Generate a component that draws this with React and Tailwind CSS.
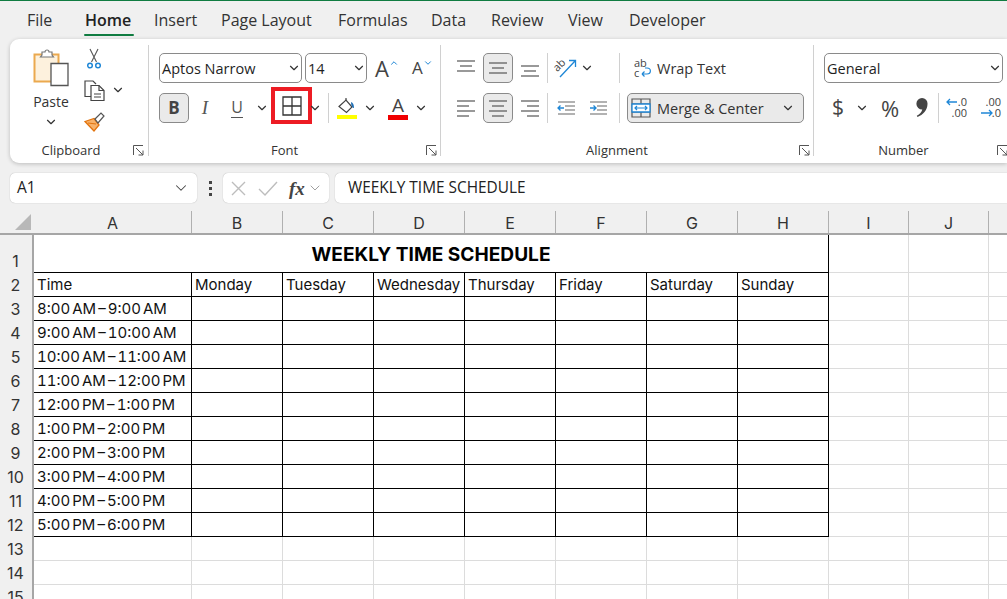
import { ChevronDown } from 'lucide-react'

const tabs = [
  { label: 'File', w: 'w-[58px]' },
  { label: 'Home', w: 'w-[69px]', active: true },
  { label: 'Insert', w: 'w-[67px]' },
  { label: 'Page Layout', w: 'w-[117px]' },
  { label: 'Formulas', w: 'w-[93px]' },
  { label: 'Data', w: 'w-[60px]' },
  { label: 'Review', w: 'w-[77px]' },
  { label: 'View', w: 'w-[61px]' },
  { label: 'Developer', w: 'w-[90px]' },
]

const columns = ['A', 'B', 'C', 'D', 'E', 'F', 'G', 'H', 'I', 'J', '']

const days = ['Monday', 'Tuesday', 'Wednesday', 'Thursday', 'Friday', 'Saturday', 'Sunday']

const times = [
  '8:00 AM – 9:00 AM',
  '9:00 AM – 10:00 AM',
  '10:00 AM – 11:00 AM',
  '11:00 AM – 12:00 PM',
  '12:00 PM – 1:00 PM',
  '1:00 PM – 2:00 PM',
  '2:00 PM – 3:00 PM',
  '3:00 PM – 4:00 PM',
  '4:00 PM – 5:00 PM',
  '5:00 PM – 6:00 PM',
]

const gridCols = 'grid grid-cols-[34px_158px_91px_91px_91px_91px_91px_91px_91px_80px_80px_19px]'

function Chev({ className = '' }) {
  return <ChevronDown size={14} strokeWidth={2} className={`shrink-0 text-[#333] ${className}`} />
}

function Launcher() {
  return (
    <svg width="11" height="11" viewBox="0 0 11 11" fill="none" stroke="#555" strokeWidth="1">
      <path d="M.5 10V.5H10M3 3l7 7M10 5.500V10H5.500" />
    </svg>
  )
}

function Sep() {
  return <div className="h-[30px] w-px bg-[#d0d0d0]" />
}

function GroupLabel({ children, pad, launcherRight }) {
  return (
    <div className={`relative mt-auto mb-[2px] flex h-[20px] items-center justify-center text-[13px] text-[#333] ${pad}`}>
      {children}
      <div className={`absolute top-[4px] ${launcherRight}`}>
        <Launcher />
      </div>
    </div>
  )
}

function Select({ label, w }) {
  return (
    <div className={`flex h-[30px] ${w} items-center justify-between rounded-[5px] border border-[#8a8a8a] bg-white pl-[2px] text-[14.500px] text-[#1f1f1f]`}>
      <span className="pt-px">{label}</span>
      <Chev />
    </div>
  )
}

function PasteIcon() {
  return (
    <svg width="36" height="40" viewBox="0 0 36 40" fill="none">
      <path d="M1.500 6.500h24v27h-24z" fill="#fdf1dd" stroke="#eba94f" strokeWidth="2" />
      <path d="M9 7V4h3a2 2 0 0 1 4 0h3v3l1.500 2h-13z" fill="#fff" stroke="#777" strokeWidth="1.200" />
      <path d="M18 15.500h17v22H18z" fill="#fff" stroke="#555" strokeWidth="1.300" />
    </svg>
  )
}

function ScissorsIcon() {
  return (
    <svg width="14" height="21" viewBox="0 0 14 21" fill="none">
      <path d="M3 1l6.500 13M11 1L4.500 14" stroke="#555" strokeWidth="1.100" />
      <circle cx="3" cy="17.500" r="2.300" stroke="#1f87d6" strokeWidth="1.500" />
      <circle cx="11" cy="17.500" r="2.300" stroke="#1f87d6" strokeWidth="1.500" />
    </svg>
  )
}

function CopyIcon() {
  return (
    <svg width="21" height="21" viewBox="0 0 21 21" fill="none" stroke="#444" strokeWidth="1.200">
      <path d="M7 16.500H1V1h8l3 3" />
      <path d="M7 5.500h8l5 5v10H7z" fill="#fff" />
      <path d="M15 5.500v5h5M10 14h7M10 17h7" />
    </svg>
  )
}

function PainterIcon() {
  return (
    <svg width="21" height="20" viewBox="0 0 21 20" fill="none">
      <path d="M1 9.500l9-3 5 6.500-5 6z" fill="#f8b26a" stroke="#e2740f" strokeWidth="1.300" />
      <path d="M4 11l8 1" stroke="#e2740f" strokeWidth="1.200" />
      <path d="M11 7l6-6 3 3-6 7z" fill="#fff" stroke="#555" strokeWidth="1.200" />
    </svg>
  )
}

function BordersIcon() {
  return (
    <svg width="20" height="20" viewBox="0 0 20 20" fill="none" stroke="#333" strokeWidth="1.300">
      <path d="M1 1h18v18H1zM10 1v18M1 10h18" />
    </svg>
  )
}

function FillIcon() {
  return (
    <svg width="20" height="21" viewBox="0 0 20 21" fill="none">
      <path d="M2 8.500L9 2l6 7-5.500 5.500z" fill="#fff" stroke="#444" strokeWidth="1.200" />
      <path d="M9 2V0" stroke="#444" strokeWidth="1.200" />
      <path d="M14 4c2 .5 3 2.500 3 6-1.500 0-3-2-3-6z" fill="#1f6fb5" />
      <path d="M0 17h20v4H0z" fill="#ffff00" />
    </svg>
  )
}

function FontColorIcon() {
  return (
    <div className="flex w-[20px] flex-col items-center">
      <span className="h-[17px] text-[19px] leading-[17px] text-[#444]">A</span>
      <div className="mt-[1px] h-[5px] w-[20px] bg-[#f00000]" />
    </div>
  )
}

function Lines({ rows }) {
  return (
    <svg width="20" height="20" viewBox="0 0 20 20" fill="none" stroke="#555" strokeWidth="1.200">
      {rows.map((r, i) => (
        <path key={i} d={`M${r[0]} ${r[2]}H${r[1]}`} />
      ))}
    </svg>
  )
}

function OrientationIcon() {
  return (
    <svg className="overflow-visible" width="22" height="20" viewBox="0 0 22 20" fill="none">
      <path d="M5 19L20 3M14 2.500h6.500V9" stroke="#1f87d6" strokeWidth="1.300" />
      <text x="0" y="11" fontSize="11" fill="#444" transform="rotate(-45 5 10)" fontFamily="Open Sans">ab</text>
    </svg>
  )
}

function IndentIcon({ dir }) {
  return (
    <svg width="18" height="14" viewBox="0 0 18 14" fill="none">
      <path d="M1 1h17M8 5h10M8 9h10M1 13h17" stroke="#666" strokeWidth="1.200" />
      <path d={dir === 'in' ? 'M1 7h6M4.500 4.500L7 7 4.500 9.500' : 'M1 7h6M3.500 4.500L1 7l2.500 2.500'} stroke="#1f87d6" strokeWidth="1.300" />
    </svg>
  )
}

function WrapIcon() {
  return (
    <svg className="overflow-visible" width="18" height="20" viewBox="0 0 18 20" fill="none">
      <text x="0" y="9" fontSize="11" fill="#444" fontFamily="Open Sans">ab</text>
      <text x="0" y="19" fontSize="11" fill="#444" fontFamily="Open Sans">c</text>
      <path d="M8 16h5c4.500 0 4.500-6 0-6h-2M8 16l2.500-2.500M8 16l2.500 2.500" stroke="#1f87d6" strokeWidth="1.200" />
    </svg>
  )
}

function MergeIcon() {
  return (
    <svg width="20" height="20" viewBox="0 0 20 20" fill="none">
      <path d="M1 1h18v18H1zM1 6h18M1 14h18M10 1v5M10 14v5" stroke="#555" strokeWidth="1.200" />
      <path d="M1 6h18v8H1z" fill="#fff" stroke="#1f87d6" strokeWidth="1.300" />
      <path d="M4 10h12M6 8l-2 2 2 2M14 8l2 2-2 2" stroke="#1f87d6" strokeWidth="1.200" />
    </svg>
  )
}

function DecimalIcon({ more }) {
  return (
    <svg width="22" height="22" viewBox="0 0 22 22" fill="none" className="overflow-visible">
      <text x="21" y="9" textAnchor="end" fontSize="11" fill="#444" fontFamily="Open Sans">{more ? '.00' : '.0'}</text>
      <text x="21" y="20" textAnchor="end" fontSize="11" fill="#444" fontFamily="Open Sans">{more ? '.0' : '.00'}</text>
      <g stroke="#1f87d6" strokeWidth="1.300">
        {more ? <path d="M1 16h11M9 13l3 3-3 3" /> : <path d="M1 5h10M4 2L1 5l3 3" />}
      </g>
    </svg>
  )
}

function CommaIcon() {
  return (
    <svg width="14" height="20" viewBox="0 0 14 20" fill="#444">
      <path d="M7 0a5.500 5.500 0 0 1 5.500 6c0 6-4.500 11-10 13l-.7-1.200c3-1.500 5-3.800 5.500-6.300A5.500 5.500 0 0 1 7 0z" />
    </svg>
  )
}

function Slot({ w, children }) {
  return <div className={`flex h-[30px] ${w} items-center justify-center`}>{children}</div>
}

function Pressed({ children }) {
  return (
    <div className="flex h-[30px] w-[30px] items-center justify-center rounded-[5px] border border-[#8a8a8a] bg-[#eaeaea]">
      {children}
    </div>
  )
}

function Ribbon() {
  return (
    <div className="ml-[10px] flex h-[124px] shrink-0 rounded-l-[9px] bg-white shadow-[0_1px_4px_rgba(0,0,0,0.22)]">
      {/* Clipboard */}
      <div className="flex w-[138px] flex-col">
        <div className="flex pt-[9px]">
          <div className="ml-[22px] flex w-[38px] flex-col items-center">
            <PasteIcon />
            <span className="mt-[4px] text-[14px] leading-[20px] text-[#333]">Paste</span>
            <Chev className="mt-[3px]" />
          </div>
          <div className="ml-[12px] flex w-[24px] flex-col items-center">
            <ScissorsIcon />
            <div className="mt-[11px]"><CopyIcon /></div>
            <div className="mt-[11px]"><PainterIcon /></div>
          </div>
          <Chev className="mt-[35px] ml-[5px]" />
        </div>
        <GroupLabel pad="pr-[16px]" launcherRight="right-[4px]">Clipboard</GroupLabel>
      </div>
      <div className="mt-[6px] h-[111px] w-px bg-[#d0d0d0]" />

      {/* Font */}
      <div className="flex w-[291px] flex-col pt-[14px]">
        <div className="ml-[10px] flex h-[30px] items-center">
          <Select label="Aptos Narrow" w="w-[143px]" />
          <div className="w-[3px]" />
          <Select label="14" w="w-[62px]" />
          <span className="ml-[8px] text-[22px] leading-[24px] text-[#444]">A</span>
          <ChevronDown size={10} strokeWidth={2.4} className="mb-[10px] rotate-180 text-[#1f87d6]" />
          <span className="ml-[13px] text-[17px] leading-[24px] text-[#444]">A</span>
          <ChevronDown size={10} strokeWidth={2.4} className="mb-[10px] text-[#1f87d6]" />
        </div>
        <div className="ml-[10px] mt-[10px] flex h-[30px] items-center">
          <Pressed><span className="text-[17px] font-bold text-[#444]">B</span></Pressed>
          <Slot w="w-[32px]"><span className="font-['Liberation_Serif'] text-[19px] italic text-[#555]">I</span></Slot>
          <Slot w="w-[32px]"><span className="border-b border-[#555] text-[16px] leading-[19px] text-[#555]">U</span></Slot>
          <Slot w="w-[18px]"><Chev /></Slot>
          <div className="-mt-[5px] flex h-[37px] w-[41px] shrink-0 items-center justify-center border-4 border-[#ed1c24] bg-white">
            <BordersIcon />
          </div>
          <Slot w="w-[6px]"><Chev /></Slot>
          <div className="ml-[10px]"><Sep /></div>
          <div className="ml-[6px]"><Slot w="w-[24px]"><FillIcon /></Slot></div>
          <Slot w="w-[22px]"><Chev /></Slot>
          <div className="ml-[5px]"><Slot w="w-[24px]"><FontColorIcon /></Slot></div>
          <Slot w="w-[22px]"><Chev /></Slot>
        </div>
        <GroupLabel pad="pr-[20px]" launcherRight="right-[3px]">Font</GroupLabel>
      </div>
      <div className="mt-[6px] h-[111px] w-px bg-[#d0d0d0]" />

      {/* Alignment */}
      <div className="flex w-[372px] flex-col pt-[14px]">
        <div className="ml-[10px] flex h-[30px] items-center">
          <Slot w="w-[30px]"><Lines rows={[[1, 19, 3], [4, 16, 8], [1, 19, 13]]} /></Slot>
          <div className="ml-[2px]"><Pressed><Lines rows={[[1, 19, 5], [4, 16, 10], [1, 19, 15]]} /></Pressed></div>
          <div className="ml-[2px]"><Slot w="w-[30px]"><Lines rows={[[1, 19, 8], [4, 16, 13], [1, 19, 18]]} /></Slot></div>
          <div className="ml-[2px]"><Sep /></div>
          <div className="ml-[6px]"><Slot w="w-[24px]"><OrientationIcon /></Slot></div>
          <Slot w="w-[18px]"><Chev /></Slot>
          <div className="ml-[23px]"><Sep /></div>
          <div className="ml-[14px] flex items-center">
            <WrapIcon />
            <span className="ml-[5px] pt-px text-[14.500px] text-[#333]">Wrap Text</span>
          </div>
        </div>
        <div className="ml-[10px] mt-[10px] flex h-[30px] items-center">
          <Slot w="w-[30px]"><Lines rows={[[1, 19, 3], [1, 13, 8], [1, 19, 13], [1, 13, 18]]} /></Slot>
          <div className="ml-[2px]"><Pressed><Lines rows={[[1, 19, 3], [4, 16, 8], [1, 19, 13], [4, 16, 18]]} /></Pressed></div>
          <div className="ml-[2px]"><Slot w="w-[30px]"><Lines rows={[[1, 19, 3], [7, 19, 8], [1, 19, 13], [7, 19, 18]]} /></Slot></div>
          <div className="ml-[2px]"><Sep /></div>
          <div className="ml-[8px]"><Slot w="w-[20px]"><IndentIcon dir="out" /></Slot></div>
          <div className="ml-[12px]"><Slot w="w-[20px]"><IndentIcon dir="in" /></Slot></div>
          <div className="ml-[11px]"><Sep /></div>
          <div className="ml-[7px] flex h-[30px] w-[177px] items-center rounded-[5px] border border-[#8a8a8a] bg-[#eaeaea] pl-[3px] pr-[8px]">
            <MergeIcon />
            <span className="ml-[6px] pt-px text-[14.500px] text-[#333]">Merge &amp; Center</span>
            <Chev className="ml-auto" />
          </div>
        </div>
        <GroupLabel pad="pr-[20px]" launcherRight="right-[3px]">Alignment</GroupLabel>
      </div>
      <div className="mt-[6px] h-[111px] w-px bg-[#d0d0d0]" />

      {/* Number */}
      <div className="flex w-[193px] flex-col pt-[14px]">
        <div className="ml-[10px] flex h-[30px] items-center">
          <Select label="General" w="w-[179px]" />
        </div>
        <div className="ml-[14px] mt-[10px] flex h-[30px] items-center">
          <span className="w-[20px] text-center text-[21px] text-[#444]">$</span>
          <Slot w="w-[28px]"><Chev /></Slot>
          <span className="w-[28px] text-center text-[22px] text-[#444]">%</span>
          <div className="ml-[3px]"><Slot w="w-[30px]"><CommaIcon /></Slot></div>
          <div className="ml-[1px]"><Sep /></div>
          <div className="ml-[7px]"><DecimalIcon /></div>
          <div className="ml-[12px]"><DecimalIcon more /></div>
        </div>
        <GroupLabel pad="pr-[14px]" launcherRight="-right-[1px]">Number</GroupLabel>
      </div>
    </div>
  )
}

function FormulaBar() {
  return (
    <div className="mt-[10px] flex h-[30px] shrink-0 items-stretch">
      <div className="ml-[10px] flex w-[187px] items-center justify-between rounded-[5px] bg-white pl-[7px] pr-[7px] text-[15.500px] text-[#222] shadow-[0_0_1px_rgba(0,0,0,0.35)]">
        <span>A1</span>
        <ChevronDown size={18} strokeWidth={1.4} className="text-[#444]" />
      </div>
      <div className="flex w-[26px] flex-col items-center justify-center gap-[3px]">
        <div className="h-[3px] w-[3px] bg-[#444]" />
        <div className="h-[3px] w-[3px] bg-[#444]" />
        <div className="h-[3px] w-[3px] bg-[#444]" />
      </div>
      <div className="flex w-[106px] items-center rounded-[5px] bg-white pl-[8px] shadow-[0_0_1px_rgba(0,0,0,0.35)]">
        <svg width="15" height="15" viewBox="0 0 15 15" fill="none" stroke="#bdbdbd" strokeWidth="1.400">
          <path d="M1 1l13 13M14 1L1 14" />
        </svg>
        <svg className="ml-[12px]" width="20" height="15" viewBox="0 0 20 15" fill="none" stroke="#bdbdbd" strokeWidth="1.400">
          <path d="M1 8l6 6L19 1" />
        </svg>
        <span className="ml-[11px] font-['Liberation_Serif'] text-[19px] font-bold italic leading-none text-[#444]">fx</span>
        <ChevronDown size={16} strokeWidth={1.4} className="ml-[2px] text-[#999]" />
      </div>
      <div className="ml-[6px] flex flex-1 items-center rounded-l-[5px] bg-white pl-[13px] text-[15.400px] text-[#222] shadow-[0_0_1px_rgba(0,0,0,0.35)]">
        WEEKLY TIME SCHEDULE
      </div>
    </div>
  )
}

function RowHead({ n, tall }) {
  return (
    <div className={`flex ${tall ? 'h-[38px]' : 'h-[24px]'} items-end justify-center border-r-2 border-[#a6a6a6] bg-[#f0f0f0] pr-[1px] pb-px text-[16px] leading-[22px] text-[#333]`}>
      {n}
    </div>
  )
}

function Cell({ children }) {
  return (
    <div className="flex h-[24px] items-end border-r border-b border-black bg-white pl-[3px] text-[15px] leading-[22px] whitespace-nowrap text-[#111] tabular-nums [word-spacing:-2px]">
      {children}
    </div>
  )
}

function Blank({ tall }) {
  return <div className={`${tall ? 'h-[38px]' : 'h-[24px]'} border-b border-r border-[#dcdcdc] bg-white`} />
}

function Sheet() {
  return (
    <div className="mt-[8px] shrink-0 font-['Inter']">
      <div className={`${gridCols} h-[24px] border-b-2 border-[#a6a6a6]`}>
        <div className="flex items-end justify-end pr-[3px] pb-[3px]">
          <div className="h-0 w-0 border-b-[16px] border-l-[16px] border-b-[#b8b8b8] border-l-transparent" />
        </div>
        {columns.map((c) => (
          <div key={c || 'k'} className="flex items-center justify-center border-r border-[#b0b0b0] pt-px text-[16px] leading-none text-[#333]">
            {c}
          </div>
        ))}
      </div>

      <div className={gridCols}>
        <RowHead n={1} tall />
        <div className="col-span-8 flex h-[38px] items-end justify-center border-r border-b border-black bg-white pb-[5px] text-[19.100px] leading-[26px] font-bold text-black">
          WEEKLY TIME SCHEDULE
        </div>
        <Blank tall />
        <Blank tall />
        <Blank tall />

        <RowHead n={2} />
        <Cell>Time</Cell>
        {days.map((d) => (
          <Cell key={d}>{d}</Cell>
        ))}
        <Blank />
        <Blank />
        <Blank />

        {times.map((t, i) => (
          <div key={t} className="contents">
            <RowHead n={i + 3} />
            <Cell>{t}</Cell>
            {days.map((d) => (
              <Cell key={d} />
            ))}
            <Blank />
            <Blank />
            <Blank />
          </div>
        ))}

        {[13, 14, 15].map((n) => (
          <div key={n} className="contents">
            <RowHead n={n} />
            {columns.map((c) => (
              <Blank key={c || 'k'} />
            ))}
          </div>
        ))}
      </div>
    </div>
  )
}

export default function App() {
  return (
    <div className="flex h-[599px] w-[1007px] flex-col overflow-hidden bg-[#f0f0f0] font-['Open_Sans','Noto_Sans',sans-serif]">
      <div className="h-px shrink-0 bg-[#107c41]" />
      <div className="flex h-[38px] shrink-0 pl-[27px]">
        {tabs.map((t) => (
          <div key={t.label} className={`${t.w} relative flex h-[35px] items-center pt-[2px] text-[16px] ${t.active ? 'font-semibold text-[#222]' : 'text-[#333]'}`}>
            {t.label}
            {t.active && <div className="absolute right-[20px] bottom-0 left-[-1px] h-[2px] rounded-full bg-[#107c41]" />}
          </div>
        ))}
      </div>
      <Ribbon />
      <FormulaBar />
      <Sheet />
    </div>
  )
}
